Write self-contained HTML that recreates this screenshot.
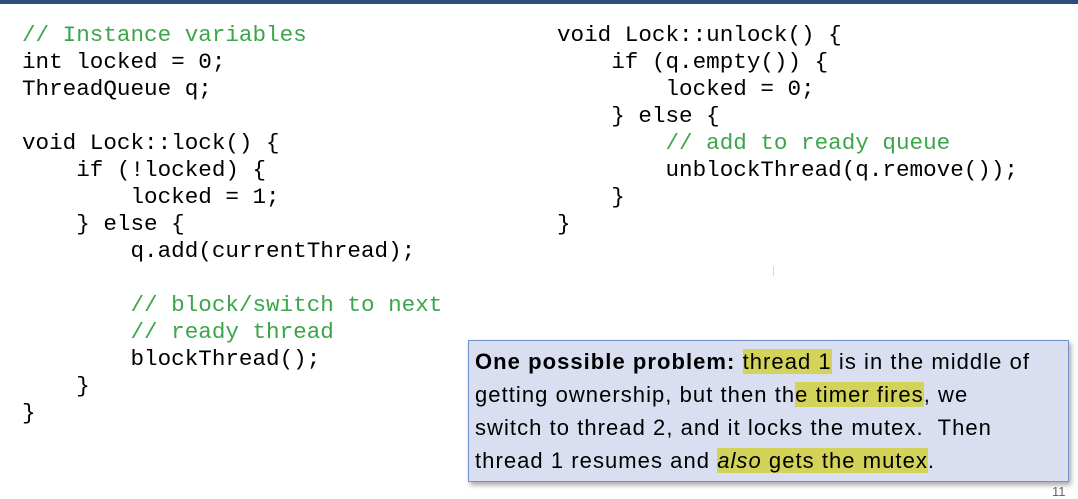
<!DOCTYPE html>
<html><head><style>
body{margin:0;width:1078px;height:492px;background:#fff;position:relative;overflow:hidden}
.bar{position:absolute;left:0;top:0;width:1078px;height:4px;background:#2d4e7a}
pre{position:absolute;margin:0;font-family:"Liberation Mono",monospace;font-size:22.6px;line-height:27px;color:#000}
.c{color:#3aa64a}
.box{position:absolute;left:468px;top:340px;width:601px;height:142px;background:#d9dff1;border:1px solid #7590cf;box-shadow:2px 3px 5px rgba(0,0,0,.35);box-sizing:border-box;font-family:"Liberation Sans",sans-serif;font-size:22px;letter-spacing:1.05px;line-height:33px;padding:4px 0 0 6px;color:#000}
.box div{white-space:nowrap}
.h{background:#d3d35a}
</style></head><body>
<div class="bar"></div>
<pre style="left:22px;top:22px"><span class="c">// Instance variables</span>
int locked = 0;
ThreadQueue q;

void Lock::lock() {
    if (!locked) {
        locked = 1;
    } else {
        q.add(currentThread);

        <span class="c">// block/switch to next</span>
        <span class="c">// ready thread</span>
        blockThread();
    }
}</pre>
<pre style="left:557px;top:22px">void Lock::unlock() {
    if (q.empty()) {
        locked = 0;
    } else {
        <span class="c">// add to ready queue</span>
        unblockThread(q.remove());
    }
}</pre>
<div style="position:absolute;left:773px;top:266px;width:1px;height:10px;background:#e8e080"></div>
<div class="box">
<div><b>One possible problem:</b> <span class="h">thread 1</span> is in the middle of</div>
<div>getting ownership, but then th<span class="h">e timer fires</span>, we</div>
<div>switch to thread 2, and it locks the mutex.&nbsp; Then</div>
<div>thread 1 resumes and <span class="h"><i>also</i> gets the mutex</span>.</div>
</div>
<div style="position:absolute;left:1052px;top:484px;font-family:'Liberation Sans',sans-serif;font-size:13px;color:#666">11</div>
</body></html>
